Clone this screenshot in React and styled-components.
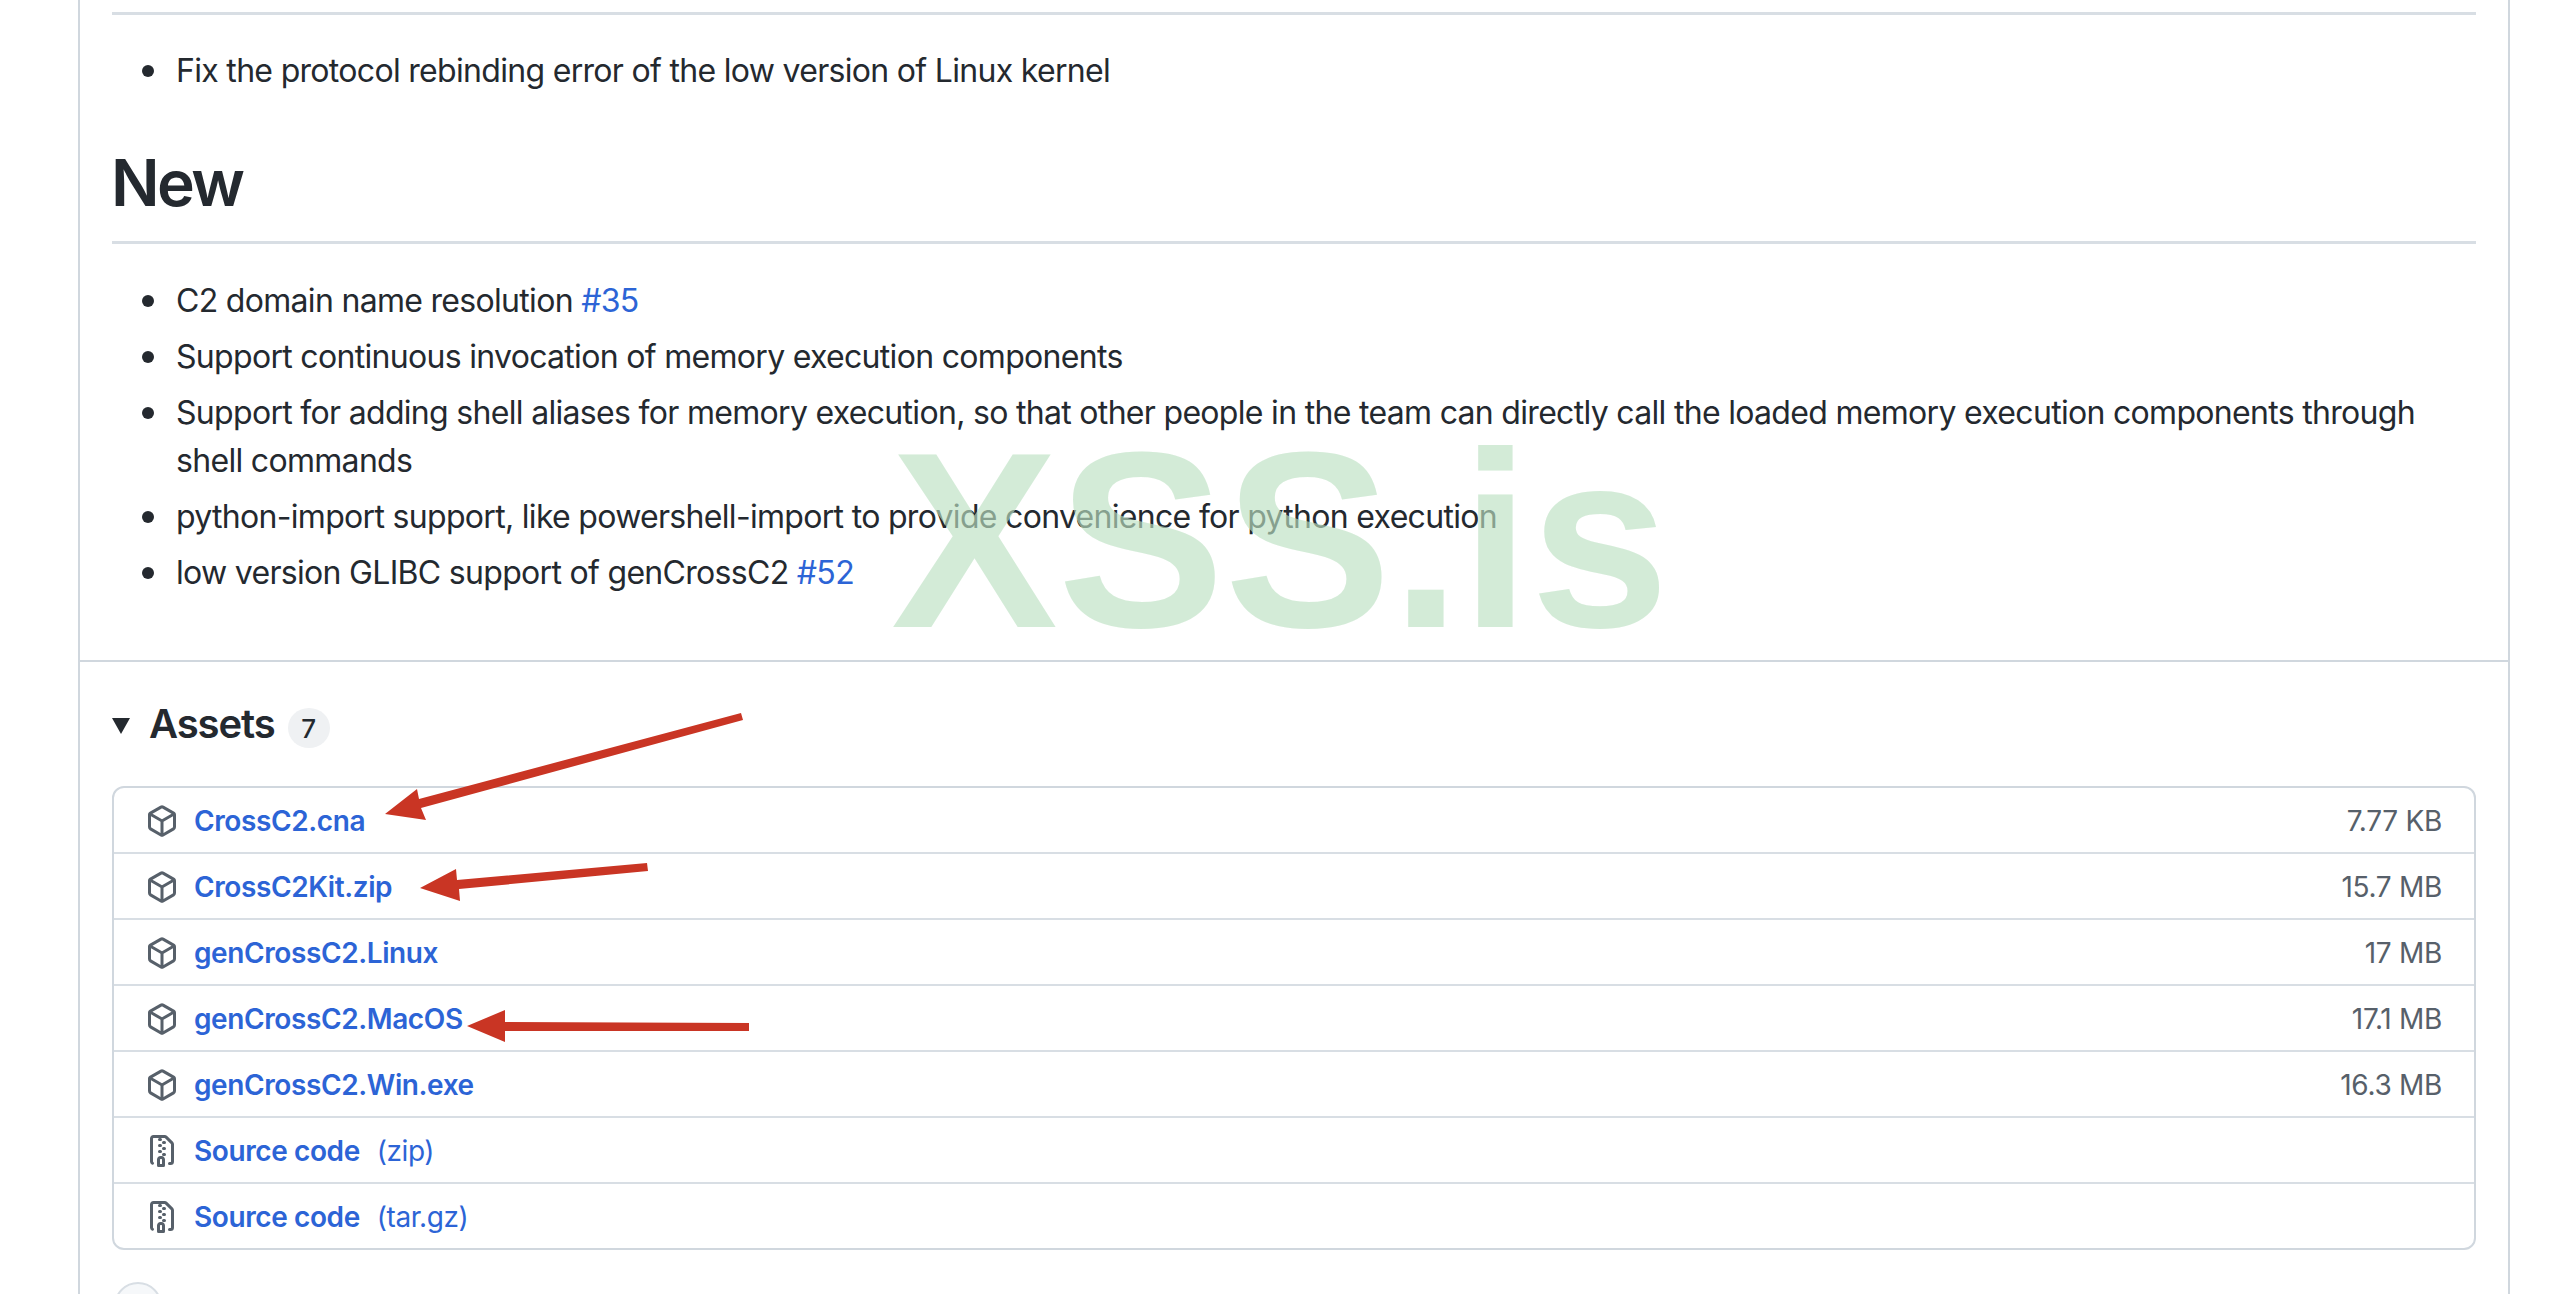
import React from 'react';
import styled, { createGlobalStyle } from 'styled-components';

const GlobalStyle = createGlobalStyle`
  html, body {
    margin: 0;
    padding: 0;
    background: #fff;
    overflow: hidden;
  }
  body {
    font-family: Inter, "Liberation Sans", sans-serif;
    color: #24292f;
  }
`;

const Page = styled.div`
  position: relative;
  height: 1294px;
  overflow: hidden;
  padding: 0 44px 0 78px;
  box-sizing: border-box;
`;

const Card = styled.div`
  height: 100%;
  border-left: 2px solid #d0d7de;
  border-right: 2px solid #d0d7de;
`;

const Notes = styled.div`
  padding: 12px 32px 0;
  height: 662px;
  box-sizing: border-box;
  border-bottom: 2px solid #d0d7de;
`;

const Rule = styled.div`
  height: 3px;
  background: #d8dee4;
`;

const List = styled.ul`
  margin: ${(p) => p.$top}px 0 0;
  padding: 0 0 0 64px;
  list-style: none;
  font-size: 32px;
  line-height: 48px;
  letter-spacing: -0.69px;
`;

const Item = styled.li`
  position: relative;
  margin-bottom: 8px;

  &::before {
    content: '';
    position: absolute;
    left: -34px;
    top: 18px;
    width: 12px;
    height: 12px;
    border-radius: 50%;
    background: #24292f;
  }
`;

const Heading = styled.h1`
  margin: 48px 0 0 -1px;
  font-size: 64px;
  line-height: 80px;
  font-weight: 600;
  letter-spacing: -2.6px;
  padding-bottom: 18px;
`;

const IssueLink = styled.a`
  color: #2c64d6;
`;

const Assets = styled.div`
  padding: 0 32px;
`;

const AssetsHead = styled.div`
  display: flex;
  align-items: center;
  height: 48px;
  margin-top: 38px;
  margin-bottom: 38px;
`;

const Caret = styled.span`
  width: 0;
  height: 0;
  border-left: 9px solid transparent;
  border-right: 9px solid transparent;
  border-top: 16px solid #24292f;
  margin-top: 4px;
`;

const AssetsTitle = styled.h3`
  margin: 0 0 0 19px;
  font-size: 40px;
  font-weight: 600;
  line-height: 48px;
  letter-spacing: -1.1px;
`;

const Counter = styled.span`
  display: flex;
  align-items: center;
  justify-content: center;
  width: 42px;
  height: 40px;
  margin: 8px 0 0 13px;
  border-radius: 50%;
  background: #eff1f3;
  font-size: 26px;
  font-weight: 500;
`;

const AssetBox = styled.div`
  border: 2px solid #d0d7de;
  border-radius: 12px;
`;

const AssetRow = styled.div`
  display: flex;
  align-items: center;
  height: 64px;
  padding: 2px 32px 0 32px;
  box-sizing: border-box;
  & + & { border-top: 2px solid #d8dee4; height: 66px; }
`;

const RowIcon = styled.svg`
  width: 32px;
  height: 32px;
  fill: #57606a;
  flex: none;
`;

const AssetName = styled.a`
  margin-left: 16px;
  font-size: 28px;
  font-weight: 600;
  color: #2c64d6;
  letter-spacing: -0.4px;
`;

const Format = styled.span`
  margin-left: 17px;
  font-size: 28px;
  font-weight: 400;
  color: #2c64d6;
  letter-spacing: -0.45px;
`;

const Size = styled.span`
  margin-left: auto;
  font-size: 28px;
  color: #57606a;
  letter-spacing: -0.3px;
`;

const ReactionButton = styled.div`
  width: 44px;
  height: 44px;
  margin: 32px 0 0 2px;
  border: 2px solid #d8dee4;
  border-radius: 50%;
  background: #f6f8fa;
`;

const Watermark = styled.div`
  position: absolute;
  left: 891px;
  top: 398px;
  font-family: "Liberation Sans", Arial, sans-serif;
  font-size: 250px;
  line-height: 286px;
  font-weight: 700;
  color: rgba(188, 225, 194, 0.65);
  pointer-events: none;
`;

const Arrows = styled.svg`
  position: absolute;
  left: 0;
  top: 0;
  pointer-events: none;
`;

const PackageIcon = () => (
  <RowIcon viewBox="0 0 16 16">
    <path d="m8.878.392 5.25 3.045c.54.314.872.89.872 1.514v6.098a1.75 1.75 0 0 1-.872 1.514l-5.25 3.045a1.75 1.75 0 0 1-1.756 0l-5.25-3.045A1.75 1.75 0 0 1 1 11.049V4.951c0-.624.332-1.201.872-1.514L7.122.392a1.75 1.75 0 0 1 1.756 0ZM7.875 1.69l-4.63 2.685L8 7.133l4.755-2.758-4.63-2.685a.248.248 0 0 0-.25 0ZM2.5 5.677v5.372c0 .09.047.171.125.216l4.625 2.683V8.432Zm6.25 8.271 4.625-2.683a.25.25 0 0 0 .125-.216V5.677L8.75 8.432Z" />
  </RowIcon>
);

const ZipIcon = () => (
  <RowIcon viewBox="0 0 16 16">
    <path d="M3.5 1.75v11.5c0 .09.048.173.126.217a.75.75 0 0 1-.752 1.298A1.748 1.748 0 0 1 2 13.25V1.75C2 .784 2.784 0 3.75 0h5.586c.464 0 .909.185 1.237.513l2.914 2.914c.329.328.513.773.513 1.237v8.586A1.75 1.75 0 0 1 12.25 15h-.5a.75.75 0 0 1 0-1.5h.5a.25.25 0 0 0 .25-.25V4.664a.25.25 0 0 0-.073-.177L9.513 1.573a.25.25 0 0 0-.177-.073H7.25a.75.75 0 0 1 0 1.5h-.5a.75.75 0 0 1 0-1.5h-3a.25.25 0 0 0-.25.25Zm3.75 8.75h.5c.966 0 1.75.784 1.75 1.75v3a.75.75 0 0 1-.75.75h-2.5a.75.75 0 0 1-.75-.75v-3c0-.966.784-1.75 1.75-1.75ZM6 5.25a.75.75 0 0 1 .75-.75h.5a.75.75 0 0 1 0 1.5h-.5A.75.75 0 0 1 6 5.25Zm.75 2.25h.5a.75.75 0 0 1 0 1.5h-.5a.75.75 0 0 1 0-1.5ZM8 6.75A.75.75 0 0 1 8.75 6h.5a.75.75 0 0 1 0 1.5h-.5A.75.75 0 0 1 8 6.75ZM8.75 3h.5a.75.75 0 0 1 0 1.5h-.5a.75.75 0 0 1 0-1.5ZM8 9.75A.75.75 0 0 1 8.75 9h.5a.75.75 0 0 1 0 1.5h-.5A.75.75 0 0 1 8 9.75Zm-1 2.5v2.25h1v-2.25a.25.25 0 0 0-.25-.25h-.5a.25.25 0 0 0-.25.25Z" />
  </RowIcon>
);

const assets = [
  { name: 'CrossC2.cna', size: '7.77 KB' },
  { name: 'CrossC2Kit.zip', size: '15.7 MB' },
  { name: 'genCrossC2.Linux', size: '17 MB' },
  { name: 'genCrossC2.MacOS', size: '17.1 MB' },
  { name: 'genCrossC2.Win.exe', size: '16.3 MB' },
  { name: 'Source code', format: '(zip)' },
  { name: 'Source code', format: '(tar.gz)' },
];

export default function App() {
  return (
    <>
      <GlobalStyle />
      <Page>
        <Card>
          <Notes>
            <Rule />
            <List $top={32}>
              <Item>Fix the protocol rebinding error of the low version of Linux kernel</Item>
            </List>
            <Heading>New</Heading>
            <Rule />
            <List $top={33}>
              <Item>
                C2 domain name resolution <IssueLink>#35</IssueLink>
              </Item>
              <Item>Support continuous invocation of memory execution components</Item>
              <Item>
                Support for adding shell aliases for memory execution, so that other people in the team can
                directly call the loaded memory execution components through shell commands
              </Item>
              <Item>python-import support, like powershell-import to provide convenience for python execution</Item>
              <Item>
                low version GLIBC support of genCrossC2 <IssueLink>#52</IssueLink>
              </Item>
            </List>
          </Notes>
          <Assets>
            <AssetsHead>
              <Caret />
              <AssetsTitle>Assets</AssetsTitle>
              <Counter>7</Counter>
            </AssetsHead>
            <AssetBox>
              {assets.map((a, i) => (
                <AssetRow key={i}>
                  {a.format ? <ZipIcon /> : <PackageIcon />}
                  <AssetName>{a.name}</AssetName>
                  {a.format && <Format>{a.format}</Format>}
                  {a.size && <Size>{a.size}</Size>}
                </AssetRow>
              ))}
            </AssetBox>
            <ReactionButton />
          </Assets>
        </Card>
        <Watermark>XSS.is</Watermark>
        <Arrows width="2554" height="1294" viewBox="0 0 2554 1294">
          <g fill="#c93524">
            <polygon points="741,713 743,720 421,808 426,820 385,814 417,789 419,799" />
            <polygon points="647,863 648,871 459,889 460,901 420,888 456,869 457,880" />
            <polygon points="749,1023 749,1031 505,1031 505,1042 467,1026 505,1010 505,1022" />
          </g>
        </Arrows>
      </Page>
    </>
  );
}
